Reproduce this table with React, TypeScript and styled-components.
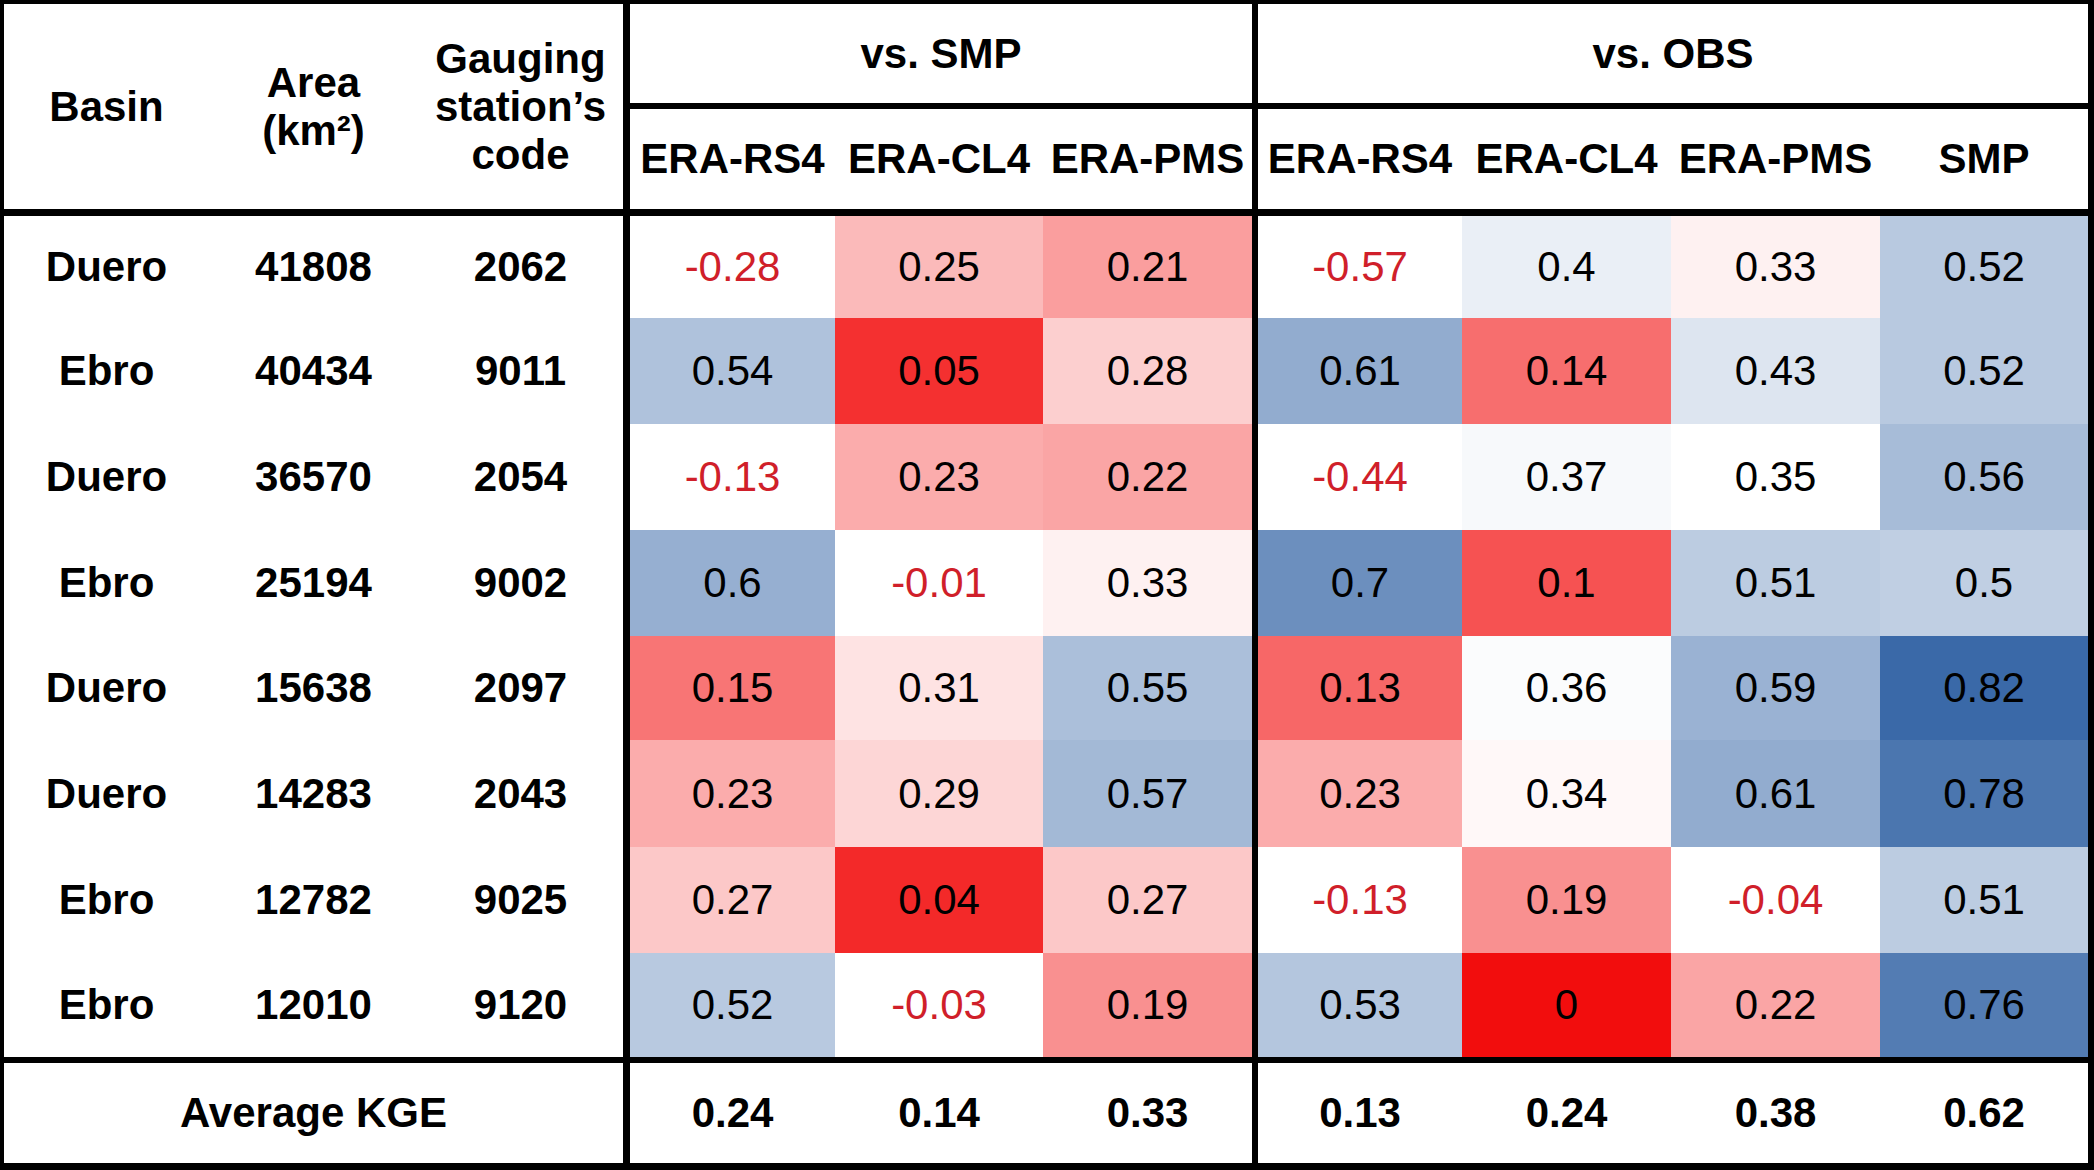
import React from "react";
import styled, { createGlobalStyle } from "styled-components";

const GlobalStyle = createGlobalStyle`
  *, *::before, *::after { box-sizing: border-box; }
  html, body { margin: 0; padding: 0; background: #ffffff; }
  body { font-family: "Liberation Sans", Arial, sans-serif; }
`;

const Table = styled.div`
  width: 2094px;
  height: 1170px;
  display: grid;
  grid-template-columns: 205px 209px 212px 205px 208px 215px 204px 209px 209px 208px;
  grid-template-rows: 105px 107px 102px 106px 106px 106px 104px 107px 106px 110px 100px;
  border-style: solid;
  border-color: #000;
  border-width: 4px 6px 7px 4px;
  background: #fff;
  color: #000;
  font-family: "Liberation Sans", Arial, sans-serif;
  font-size: 42px;
`;

const Cell = styled.div<{ $right?: number; $bottom?: number }>`
  display: flex;
  align-items: center;
  justify-content: center;
  text-align: center;
  border-style: solid;
  border-color: #000;
  border-width: 0 ${(p) => p.$right ?? 0}px ${(p) => p.$bottom ?? 0}px 0;
`;

const HeadCell = styled(Cell)`
  grid-row: span 2;
  font-weight: 700;
  line-height: 48px;
`;

const GroupHead = styled(Cell)<{ $span: number }>`
  grid-column: span ${(p) => p.$span};
  font-weight: 700;
`;

const SubHead = styled(Cell)`
  font-weight: 700;
  white-space: nowrap;
`;

const LabelCell = styled(Cell)`
  font-weight: 700;
`;

const ValueCell = styled(Cell)<{ $bg: string; $neg: boolean }>`
  background: ${(p) => p.$bg};
  color: ${(p) => (p.$neg ? "#d01f2a" : "#000")};
  font-weight: 400;
`;

const AvgLabel = styled(Cell)`
  grid-column: span 3;
  font-weight: 700;
`;

const AvgCell = styled(Cell)`
  font-weight: 700;
`;

type Row = {
  basin: string;
  area: string;
  code: string;
  smp: number[];
  obs: number[];
};

const rows: Row[] = [
  { basin: "Duero", area: "41808", code: "2062", smp: [-0.28, 0.25, 0.21], obs: [-0.57, 0.4, 0.33, 0.52] },
  { basin: "Ebro", area: "40434", code: "9011", smp: [0.54, 0.05, 0.28], obs: [0.61, 0.14, 0.43, 0.52] },
  { basin: "Duero", area: "36570", code: "2054", smp: [-0.13, 0.23, 0.22], obs: [-0.44, 0.37, 0.35, 0.56] },
  { basin: "Ebro", area: "25194", code: "9002", smp: [0.6, -0.01, 0.33], obs: [0.7, 0.1, 0.51, 0.5] },
  { basin: "Duero", area: "15638", code: "2097", smp: [0.15, 0.31, 0.55], obs: [0.13, 0.36, 0.59, 0.82] },
  { basin: "Duero", area: "14283", code: "2043", smp: [0.23, 0.29, 0.57], obs: [0.23, 0.34, 0.61, 0.78] },
  { basin: "Ebro", area: "12782", code: "9025", smp: [0.27, 0.04, 0.27], obs: [-0.13, 0.19, -0.04, 0.51] },
  { basin: "Ebro", area: "12010", code: "9120", smp: [0.52, -0.03, 0.19], obs: [0.53, 0, 0.22, 0.76] },
];

const avgSmp = ["0.24", "0.14", "0.33"];
const avgObs = ["0.13", "0.24", "0.38", "0.62"];

const RED = [242, 13, 13];
const BLUE = [58, 105, 168];
const MID = 0.35;
const MAX = 0.82;

function mix(target: number[], t: number): string {
  const c = target.map((v) => Math.round(255 - t * (255 - v)));
  return `rgb(${c[0]}, ${c[1]}, ${c[2]})`;
}

function colorFor(v: number): string {
  if (v < 0) return "#ffffff";
  if (v <= MID) return mix(RED, Math.min(1, 1 - v / MID));
  return mix(BLUE, Math.min(1, (v - MID) / (MAX - MID)));
}

export default function App() {
  const last = rows.length - 1;
  return (
    <>
      <GlobalStyle />
      <Table>
        <HeadCell $bottom={7}>Basin</HeadCell>
        <HeadCell $bottom={7}>
          Area
          <br />
          (km²)
        </HeadCell>
        <HeadCell $bottom={7} $right={7}>
          Gauging
          <br />
          station’s
          <br />
          code
        </HeadCell>
        <GroupHead $span={3} $bottom={6} $right={6}>
          vs. SMP
        </GroupHead>
        <GroupHead $span={4} $bottom={6}>
          vs. OBS
        </GroupHead>

        <SubHead $bottom={7}>ERA-RS4</SubHead>
        <SubHead $bottom={7}>ERA-CL4</SubHead>
        <SubHead $bottom={7} $right={6}>
          ERA-PMS
        </SubHead>
        <SubHead $bottom={7}>ERA-RS4</SubHead>
        <SubHead $bottom={7}>ERA-CL4</SubHead>
        <SubHead $bottom={7}>ERA-PMS</SubHead>
        <SubHead $bottom={7}>SMP</SubHead>

        {rows.map((r, i) => {
          const b = i === last ? 6 : 0;
          return (
            <React.Fragment key={i}>
              <LabelCell $bottom={b}>{r.basin}</LabelCell>
              <LabelCell $bottom={b}>{r.area}</LabelCell>
              <LabelCell $bottom={b} $right={7}>
                {r.code}
              </LabelCell>
              {r.smp.map((v, j) => (
                <ValueCell
                  key={`s${j}`}
                  $bg={colorFor(v)}
                  $neg={v < 0}
                  $bottom={b}
                  $right={j === 2 ? 6 : 0}
                >
                  {String(v)}
                </ValueCell>
              ))}
              {r.obs.map((v, j) => (
                <ValueCell key={`o${j}`} $bg={colorFor(v)} $neg={v < 0} $bottom={b}>
                  {String(v)}
                </ValueCell>
              ))}
            </React.Fragment>
          );
        })}

        <AvgLabel $right={7}>Average KGE</AvgLabel>
        {avgSmp.map((v, j) => (
          <AvgCell key={`as${j}`} $right={j === 2 ? 6 : 0}>
            {v}
          </AvgCell>
        ))}
        {avgObs.map((v, j) => (
          <AvgCell key={`ao${j}`}>{v}</AvgCell>
        ))}
      </Table>
    </>
  );
}
